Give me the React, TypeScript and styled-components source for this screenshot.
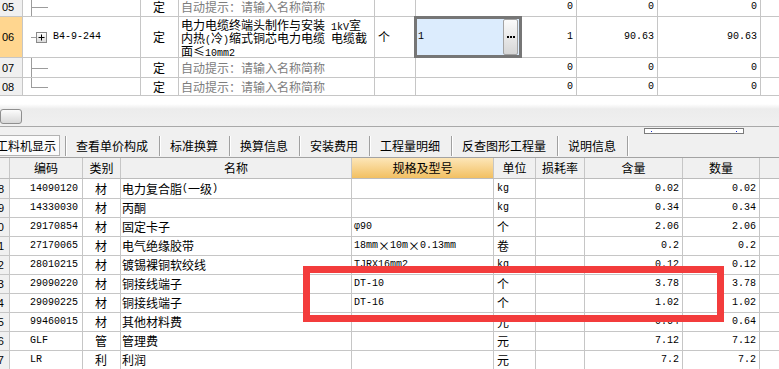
import React from "react";
import styled, { createGlobalStyle } from "styled-components";

const LINE = "#c6c6c6";
const CJK = `"Noto Sans CJK SC", "Liberation Sans", sans-serif`;

const GlobalStyle = createGlobalStyle`
  html, body { margin: 0; padding: 0; background: #ffffff; }
  body { font-family: ${CJK}; font-size: 12px; color: #000; }
`;

const Screen = styled.div`
  position: relative;
  width: 779px;
  height: 369px;
  overflow: hidden;
  display: flex;
  flex-direction: column;
  background: #fff;
`;

/* ---------- shared cells ---------- */
type Align = "left" | "center" | "right";
const justify = (a?: Align) =>
  a === "center" ? "center" : a === "right" ? "flex-end" : "flex-start";

const Row = styled.div<{ $h: number }>`
  display: flex;
  flex: none;
  height: ${(p) => p.$h}px;
  box-sizing: border-box;
  border-bottom: 1px solid ${LINE};
`;

const Cell = styled.div<{
  $w?: number;
  $align?: Align;
  $bg?: string;
  $pl?: number;
  $pr?: number;
  $muted?: boolean;
  $hideLine?: boolean;
}>`
  position: relative;
  box-sizing: border-box;
  ${(p) => (p.$w ? `width: ${p.$w}px; flex: none;` : `flex: 1;`)}
  height: 100%;
  display: flex;
  align-items: center;
  justify-content: ${(p) => justify(p.$align)};
  padding-left: ${(p) => p.$pl ?? 2}px;
  padding-right: ${(p) => p.$pr ?? 3}px;
  border-right: 1px solid ${(p) => (p.$hideLine ? "transparent" : LINE)};
  background: ${(p) => p.$bg ?? "transparent"};
  color: ${(p) => (p.$muted ? "#7d7d7d" : "#000")};
  white-space: nowrap;
  overflow: hidden;
  line-height: 14px;
`;

const Mono = styled.span`
  font-family: "Liberation Mono", "DejaVu Sans Mono", monospace;
  font-size: 10px;
  line-height: 10px;
  white-space: pre;
`;

const RowNo = styled.span`
  font-family: "Liberation Sans", Arial, sans-serif;
  font-size: 11px;
`;

const LATIN = /^[\x20-\x7E\u0370-\u03FF]+$/;

function Mixed({ text }: { text: string }) {
  const parts = text.split(/([\x20-\x7E\u0370-\u03FF]+)/).filter((s) => s.length > 0);
  return (
    <>
      {parts.map((p, i) =>
        LATIN.test(p) ? <Mono key={i}>{p}</Mono> : <span key={i}>{p}</span>
      )}
    </>
  );
}

/* ---------- top grid ---------- */
const TopPanel = styled.div`
  flex: none;
  height: 104px;
  overflow: hidden;
  background: #fff;
`;

const TopGrid = styled.div`
  margin-top: -3px;
  display: flex;
  flex-direction: column;
`;

const TreeCell = styled(Cell)<{ $kind: "mid" | "last" | "node" }>`
  &::before {
    content: "";
    position: absolute;
    left: 8px;
    top: 0;
    width: 1px;
    bottom: ${(p) => (p.$kind === "last" ? "50%" : "0")};
    background: #9c9c9c;
    display: ${(p) => (p.$kind === "node" ? "none" : "block")};
  }
  &::after {
    content: "";
    position: absolute;
    left: 8px;
    top: 50%;
    height: 1px;
    width: ${(p) => (p.$kind === "node" ? 5 : 17)}px;
    background: #9c9c9c;
  }
`;

const PlusBox = styled.svg`
  flex: none;
  margin-left: 11px;
  margin-right: 6px;
`;

const NameCell = styled(Cell)`
  align-items: flex-start;
`;

const NameLines = styled.div`
  display: flex;
  flex-direction: column;
  padding-top: 1px;
`;

const NameLine = styled.div`
  height: 13px;
  line-height: 13px;
  white-space: nowrap;
`;

const EditCell = styled(Cell)`
  overflow: visible;
  padding: 0;
`;

const Editor = styled.div`
  position: absolute;
  left: -2px;
  top: -1px;
  right: -2px;
  bottom: -1px;
  z-index: 1;
  box-sizing: border-box;
  border: 3px solid #767676;
  background: #dcecfd;
  display: flex;
  align-items: stretch;
`;

const EditValue = styled.div`
  flex: 1;
  display: flex;
  align-items: center;
  padding-left: 1px;
`;

const DotsButton = styled.div`
  flex: none;
  width: 15px;
  margin-right: 1px;
  box-sizing: border-box;
  border: 1px solid #a3a3a3;
  border-radius: 2px;
  background: linear-gradient(#fbfbfb, #d6d6d6);
  display: flex;
  align-items: center;
  justify-content: center;
  gap: 1px;
`;

const Dot = styled.span`
  width: 2px;
  height: 2px;
  background: #000;
`;

const TOPW = [23, 118, 38, 196, 41, 105, 56, 81, 103];

type TopRow = { no: string; h: number; kind: "mid" | "last" | "node"; main?: boolean };
const TOP_ROWS: TopRow[] = [
  { no: "05", h: 20, kind: "mid" },
  { no: "06", h: 41, kind: "node", main: true },
  { no: "07", h: 20, kind: "mid" },
  { no: "08", h: 18, kind: "last" },
];

function TopRowView({ r }: { r: TopRow }) {
  if (r.main) {
    return (
      <Row $h={r.h}>
        <Cell $w={TOPW[0]} $bg="#ffd68f">
          <RowNo>{r.no}</RowNo>
        </Cell>
        <TreeCell $w={TOPW[1]} $kind="node" $pl={2}>
          <PlusBox width="11" height="11" viewBox="0 0 11 11">
            <defs>
              <linearGradient id="pb" x1="0" y1="0" x2="0" y2="1">
                <stop offset="0" stopColor="#ffffff" />
                <stop offset="1" stopColor="#d9d9d9" />
              </linearGradient>
            </defs>
            <rect x="0.5" y="0.5" width="10" height="10" fill="url(#pb)" stroke="#8a8a8a" />
            <path d="M2.5 5.5h6M5.5 2.5v6" stroke="#000" strokeWidth="1" />
          </PlusBox>
          <Mono>B4-9-244</Mono>
        </TreeCell>
        <Cell $w={TOPW[2]} $align="center">定</Cell>
        <NameCell $w={TOPW[3]}>
          <NameLines>
            <NameLine><Mixed text="电力电缆终端头制作与安装 1kV室" /></NameLine>
            <NameLine><Mixed text="内热(冷)缩式铜芯电力电缆 电缆截" /></NameLine>
            <NameLine><Mixed text="面≤10mm2" /></NameLine>
          </NameLines>
        </NameCell>
        <Cell $w={TOPW[4]} $pl={3}>个</Cell>
        <EditCell $w={TOPW[5]} $hideLine>
          <Editor>
            <EditValue>
              <Mono>1</Mono>
            </EditValue>
            <DotsButton>
              <Dot />
              <Dot />
              <Dot />
            </DotsButton>
          </Editor>
        </EditCell>
        <Cell $w={TOPW[6]} $align="right"><Mono>1</Mono></Cell>
        <Cell $w={TOPW[7]} $align="right"><Mono>90.63</Mono></Cell>
        <Cell $w={TOPW[8]} $align="right"><Mono>90.63</Mono></Cell>
        <Cell $hideLine />
      </Row>
    );
  }
  return (
    <Row $h={r.h}>
      <Cell $w={TOPW[0]} $bg="#f0f0f0">
        <RowNo>{r.no}</RowNo>
      </Cell>
      <TreeCell $w={TOPW[1]} $kind={r.kind} />
      <Cell $w={TOPW[2]} $align="center">定</Cell>
      <Cell $w={TOPW[3]} $muted>自动提示：请输入名称简称</Cell>
      <Cell $w={TOPW[4]} />
      <Cell $w={TOPW[5]} $hideLine />
      <Cell $w={TOPW[6]} $align="right"><Mono>0</Mono></Cell>
      <Cell $w={TOPW[7]} $align="right"><Mono>0</Mono></Cell>
      <Cell $w={TOPW[8]} $align="right"><Mono>0</Mono></Cell>
      <Cell $hideLine />
    </Row>
  );
}

/* ---------- scroll strip & tabs ---------- */
const ScrollStrip = styled.div`
  flex: none;
  height: 23px;
  box-sizing: border-box;
  border-bottom: 1px solid #a9a9a9;
  background: linear-gradient(#ffffff 0px, #ececec 5px, #f0f0f0 100%);
  display: flex;
  align-items: flex-end;
  padding-bottom: 2px;
`;

const ScrollButton = styled.div`
  width: 22px;
  height: 15px;
  box-sizing: border-box;
  border: 1px solid #8f8f8f;
  border-radius: 3px;
  background: linear-gradient(#fcfcfc, #d8d8d8);
`;

const TabBar = styled.div`
  position: relative;
  flex: none;
  height: 31px;
  box-sizing: border-box;
  border-bottom: 1px solid #a3a3a3;
  background: #f0f0f0;
  display: flex;
  align-items: flex-end;
  padding-bottom: 1px;
`;

const ActiveTab = styled.div`
  height: 21px;
  box-sizing: border-box;
  margin-left: -8px;
  margin-right: 5px;
  padding: 0 3px;
  border: 1px solid #b3b3b3;
  background: #fbfbfb;
  line-height: 19px;
  white-space: nowrap;
`;

const Tab = styled.div`
  height: 20px;
  padding: 0 11px 0 10px;
  line-height: 20px;
  white-space: nowrap;
`;

const TabSep = styled.div`
  width: 1px;
  height: 20px;
  background: #a0a0a0;
  box-shadow: 1px 0 0 #ffffff;
`;

const TabScroller = styled.div`
  position: absolute;
  left: 644px;
  top: 1px;
  width: 100px;
  height: 6px;
  box-sizing: border-box;
  border: 1px solid #7b7b7b;
  background: #fff;
  &::before,
  &::after {
    content: "";
    position: absolute;
    top: 2px;
    width: 1px;
    height: 1px;
    background: #1a2fbf;
  }
  &::before { left: 6px; }
  &::after { right: 6px; }
`;

const TABS = ["查看单价构成", "标准换算", "换算信息", "安装费用", "工程量明细", "反查图形工程量", "说明信息"];

/* ---------- lower grid ---------- */
const LOWW = [10, 73, 38, 231, 142, 42, 49, 98, 77];

const LowerHeader = styled.div`
  display: flex;
  flex: none;
  height: 21px;
  box-sizing: border-box;
  border-bottom: 1px solid #bcbcbc;
  background: #f0f0f0;
`;

const HeadCell = styled.div<{ $w?: number; $hl?: boolean }>`
  box-sizing: border-box;
  ${(p) => (p.$w ? `width: ${p.$w}px; flex: none;` : `flex: 1;`)}
  height: 100%;
  display: flex;
  align-items: center;
  justify-content: center;
  border-right: 1px solid ${(p) => (p.$w ? LINE : "transparent")};
  background: ${(p) => (p.$hl ? "linear-gradient(#fde6b8, #f2c062)" : "transparent")};
  white-space: nowrap;
  line-height: 14px;
`;

const LowerGrid = styled.div`
  flex: 1;
  display: flex;
  flex-direction: column;
  overflow: hidden;
`;

const NoCell = styled(Cell)`
  justify-content: flex-end;
  background: #f0f0f0;
`;

const RedFrame = styled.div`
  position: absolute;
  left: 303px;
  top: 266px;
  width: 421px;
  height: 56px;
  box-sizing: border-box;
  border: 7px solid #f33c3c;
  pointer-events: none;
`;

type Item = { no: string; code: string; kind: string; name: string; spec: string; unit: string; qty: string };
const ITEMS: Item[] = [
  { no: "8", code: "14090120", kind: "材", name: "电力复合脂(一级)", spec: "", unit: "kg", qty: "0.02" },
  { no: "9", code: "14330030", kind: "材", name: "丙酮", spec: "", unit: "kg", qty: "0.34" },
  { no: "10", code: "29170854", kind: "材", name: "固定卡子", spec: "φ90", unit: "个", qty: "2.06" },
  { no: "11", code: "27170065", kind: "材", name: "电气绝缘胶带", spec: "18mm×10m×0.13mm", unit: "卷", qty: "0.2" },
  { no: "12", code: "28010215", kind: "材", name: "镀锡裸铜软绞线", spec: "TJRX16mm2", unit: "kg", qty: "0.12" },
  { no: "13", code: "29090220", kind: "材", name: "铜接线端子", spec: "DT-10", unit: "个", qty: "3.78" },
  { no: "14", code: "29090225", kind: "材", name: "铜接线端子", spec: "DT-16", unit: "个", qty: "1.02" },
  { no: "15", code: "99460015", kind: "材", name: "其他材料费", spec: "", unit: "元", qty: "0.64" },
  { no: "16", code: "GLF", kind: "管", name: "管理费", spec: "", unit: "元", qty: "7.12" },
  { no: "17", code: "LR", kind: "利", name: "利润", spec: "", unit: "元", qty: "7.2" },
];

const HEADS = ["", "编码", "类别", "名称", "规格及型号", "单位", "损耗率", "含量", "数量"];

export default function App() {
  return (
    <>
      <GlobalStyle />
      <Screen>
        <TopPanel>
          <TopGrid>
            {TOP_ROWS.map((r) => (
              <TopRowView key={r.no} r={r} />
            ))}
          </TopGrid>
        </TopPanel>

        <ScrollStrip>
          <ScrollButton />
        </ScrollStrip>

        <TabBar>
          <ActiveTab>工料机显示</ActiveTab>
          {TABS.map((t) => (
            <React.Fragment key={t}>
              <TabSep />
              <Tab>{t}</Tab>
            </React.Fragment>
          ))}
          <TabSep />
          <TabScroller />
        </TabBar>

        <LowerHeader>
          {HEADS.map((h, i) => (
            <HeadCell key={i} $w={LOWW[i]} $hl={i === 4}>
              {h}
            </HeadCell>
          ))}
          <HeadCell />
        </LowerHeader>

        <LowerGrid>
          {ITEMS.map((it, i) => (
            <Row key={it.no} $h={i === 0 ? 20 : 19}>
              <NoCell $w={LOWW[0]} $pl={0} $pr={5}>
                <RowNo>{it.no}</RowNo>
              </NoCell>
              <Cell $w={LOWW[1]} $pl={20}>
                <Mono>{it.code}</Mono>
              </Cell>
              <Cell $w={LOWW[2]} $align="center">{it.kind}</Cell>
              <Cell $w={LOWW[3]} $pl={1}>
                <Mixed text={it.name} />
              </Cell>
              <Cell $w={LOWW[4]} $pl={2}>
                <Mixed text={it.spec} />
              </Cell>
              <Cell $w={LOWW[5]} $pl={3}>
                <Mixed text={it.unit} />
              </Cell>
              <Cell $w={LOWW[6]} />
              <Cell $w={LOWW[7]} $align="right">
                <Mono>{it.qty}</Mono>
              </Cell>
              <Cell $w={LOWW[8]} $align="right">
                <Mono>{it.qty}</Mono>
              </Cell>
              <Cell $hideLine />
            </Row>
          ))}
        </LowerGrid>

        <RedFrame />
      </Screen>
    </>
  );
}
